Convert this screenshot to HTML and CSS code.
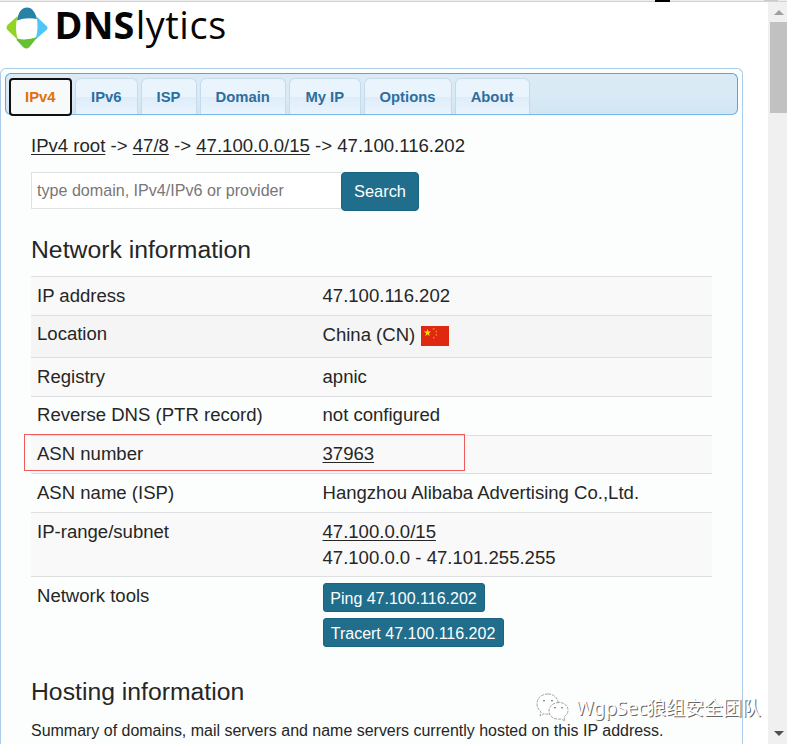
FILE: index.html
```html
<!DOCTYPE html>
<html lang="en">
<head>
<meta charset="utf-8">
<title>DNSlytics</title>
<link rel="stylesheet" href="styles.css">
</head>
<body>
<div class="window">
  <div class="chrome-edge"><span class="edge-tab"></span><span class="edge-mark"></span><span class="edge-end"></span></div>
  <div class="viewport">
    <main class="page">
      <header class="logo">
        <svg class="logo-mark" width="42" height="42" viewBox="0 0 42 42">
          <path d="M11 13.500 Q12 5 17 1.500 Q21-.5 25 1.500 Q29 4.500 31 12 Q20 10 11 13.500Z" fill="#2782a5"/>
          <path d="M11 9.500 L1.500 18 Q-.5 20.500 1.500 23 L12 33 Q8.500 22 11 12Z" fill="#93d327"/>
          <path d="M30.500 9.500 L40.500 19 Q42.500 21 40.500 23 L29.500 32.500 Q33 22 30.500 9.500Z" fill="#4fc6f7"/>
          <path d="M11 31.500 Q20 34 31.500 30 L23.500 40 Q20.500 43 17 40 L10.500 33Z" fill="#65c132"/>
        </svg>
        <div class="wordmark"><b>DNS</b><span>lytics</span></div>
      </header>
      <section class="panel">
        <nav class="tabs">
          <a class="tab w-ipv4 active">IPv4</a><a class="tab w-ipv6">IPv6</a><a class="tab w-isp">ISP</a><a class="tab w-domain">Domain</a><a class="tab w-myip">My IP</a><a class="tab w-options">Options</a><a class="tab w-about">About</a>
        </nav>
        <div class="content">
          <div class="crumbs"><u>IPv4 root</u> -&gt; <u>47/8</u> -&gt; <u>47.100.0.0/15</u> -&gt; 47.100.116.202</div>
          <form class="search">
            <input type="text" placeholder="type domain, IPv4/IPv6 or provider"><button type="button">Search</button>
          </form>
          <h2>Network information</h2>
          <div class="table">
            <div class="row shade"><span>IP address</span><span>47.100.116.202</span></div>
            <div class="row location"><span>Location</span><span class="country">China (CN)
              <svg width="28" height="20" viewBox="0 0 28 20"><rect width="28" height="20" fill="#de2910"/><path d="M6.500 3l.9 2.600h2.700L7.900 7.200l.8 2.700-2.200-1.600-2.200 1.600.8-2.700-2.200-1.600h2.700z" fill="#ffde00"/><g fill="#e98a0c"><circle cx="12.700" cy="2.900" r=".9"/><circle cx="15.300" cy="5.500" r=".9"/><circle cx="15.300" cy="8.800" r=".9"/><circle cx="12.800" cy="11.600" r=".9"/></g></svg></span></div>
            <div class="row shade registry"><span>Registry</span><span>apnic</span></div>
            <div class="row"><span>Reverse DNS (PTR record)</span><span>not configured</span></div>
            <div class="row shade marked"><span>ASN number</span><span><u>37963</u></span></div>
            <div class="row"><span>ASN name (ISP)</span><span>Hangzhou Alibaba Advertising Co.,Ltd.</span></div>
            <div class="row shade range"><span>IP-range/subnet</span><span><u>47.100.0.0/15</u><br>47.100.0.0 - 47.101.255.255</span></div>
            <div class="row tools"><span>Network tools</span><span class="buttons"><a class="ping">Ping 47.100.116.202</a><a class="trace">Tracert 47.100.116.202</a></span></div>
          </div>
          <h2 class="hosting">Hosting information</h2>
          <p class="summary">Summary of domains, mail servers and name servers currently hosted on this IP address.</p>
        </div>
      </section>
    </main>
    <aside class="scrollbar"><i class="arrow up"></i><i class="thumb"></i><i class="arrow down"></i></aside>
  </div>
  <div class="watermark">
    <svg width="34" height="30" viewBox="0 0 34 30" fill="#fff" stroke="#999" stroke-width=".9" stroke-dasharray="3 1">
      <path d="M12 1C5 1 1 5.500 1 11c0 4 2 6 4 8l-1 4 4-2.500c2 .8 4 .8 6 .5C26 20 25 1 12 1Z"/>
      <path d="M23 9.500c-6 0-10 4-10 8.500 0 6 6 9 12 8l4 2-1-4c2-1.500 4-3.500 4-6.500 0-5-4-8-9-8Z"/>
      <path d="M7 8q1-1 2 0M15 8q1-1 2 0M18 15q1-1 2 0M25 15q1-1 2 0" fill="none" stroke="#555" stroke-dasharray="none"/>
    </svg>
    <span>WgpSec狼组安全团队</span>
  </div>
</div>
</body>
</html>
```
FILE: styles.css
```css
*, ::before, ::after { box-sizing: border-box; }
body { margin: 0; background: #fff; color: #262626; font-family: "Liberation Sans", Arial, sans-serif; }
.window { position: relative; width: 787px; height: 744px; display: flex; flex-direction: column; }
.chrome-edge { height: 2px; flex: none; background: #eee; border-bottom: 1px solid #d2d2d2; display: flex; }
.edge-tab { width: 480px; margin-left: 7px; }
.edge-mark { width: 15px; height: 2px; background: #000; margin-left: 168px; }
.edge-end { width: 14px; height: 1px; background: #ccc; margin-left: 94px; }
.viewport { flex: 1; display: flex; min-height: 0; }
.page { width: 768px; display: flex; flex-direction: column; min-height: 0; }
.logo { flex: none; height: 66px; display: flex; padding: 5px 0 0 5px; }
.logo-mark { flex: none; margin: .2px 0 0 .5px; }
.wordmark { font: 37.8px/50px "Open Sans", sans-serif; color: #050505; margin: -7px 0 0 7px; display: flex; }
.wordmark b { letter-spacing: .2px; }
.wordmark span { margin-left: 1px; letter-spacing: .6px; }
.panel { width: 743px; flex: 1; min-height: 0; overflow: hidden; border: 1px solid #aaccea; border-bottom: 0; border-radius: 6px 6px 0 0; padding: 4px 4px 0; background: #fcfefe; }
.tabs { width: 733px; height: 42px; display: flex; align-items: flex-end; gap: 3px; padding-left: 3px; border: 1px solid #5ba5dd; border-bottom-color: #79b7e7; border-radius: 6px; background: linear-gradient(#dceaf5, #d9eaf6 55%, #d2e5f3); }
.tab { height: 36px; border: 1px solid #c5dbec; border-bottom: 0; border-radius: 6px 6px 0 0; background: linear-gradient(#eaf4fd 0 50%, #deedfb 51%, #eaf4fd); color: #2e6e9e; font-size: 14.8px; font-weight: 700; line-height: 36px; text-align: center; }
.tab.active { height: 38px; margin: 0 0 -2px -.5px; border: 2px solid #101010; border-radius: 4px; background: #f8fafa; color: #e17009; line-height: 35px; }
.w-ipv4 { width: 63.500px; }
.w-ipv6 { width: 62.500px; }
.w-isp { width: 56px; }
.w-domain { width: 86.500px; }
.w-myip { width: 71.500px; }
.w-options { width: 88px; }
.w-about { width: 75px; }
.content { padding: 17px 0 0 26px; font-size: 18.56px; }
.crumbs { height: 40px; line-height: 28px; font-size: 18.58px; }
.crumbs u, .row u { text-decoration-thickness: 1px; text-underline-offset: 2px; }
.search { display: flex; align-items: flex-start; height: 39px; margin: 0; }
.search input { width: 310px; height: 37px; border: 1px solid #dee2e3; border-right: 0; background: #fff; padding: 0 5px; font: 16.1px "Liberation Sans", sans-serif; }
.search input::placeholder { color: #777; }
.search button { width: 78px; height: 39px; border: 1px solid #1a6381; border-radius: 4px; background: #216e8c; color: #fff; font: 16.4px "Liberation Sans", sans-serif; padding: 0; }
h2 { margin: 24px 0 0; height: 41px; font-size: 24.75px; line-height: 30px; font-weight: 400; }
.table { width: 681px; }
.row { position: relative; display: grid; grid-template-columns: 285.5px 1fr; height: 38.750px; padding: 5.500px 6px 0; border-top: 1px solid #dddfe0; line-height: 26px; }
.shade { background: #f9f9f9; }
.row.location { height: 42.250px; background: #f5f5f5; }
.country { display: flex; gap: 6px; padding-top: 1px; }
.country svg { margin-top: 4px; }
.row.registry { padding-top: 5.800px; }
.marked::after { content: ""; position: absolute; z-index: 1; left: -7px; top: -2px; width: 441px; height: 37px; border: 1px solid #ef5a5a; }
.row.range { height: 64px; padding-top: 5.700px; }
.row.tools { height: 95px; padding-top: 6px; }
.buttons { display: flex; flex-direction: column; gap: 6px; align-items: flex-start; }
.buttons a { height: 29px; border: 1px solid #1a6381; border-radius: 3px; background: #216e8c; color: #fff; font-size: 16px; line-height: 29px; text-align: center; white-space: nowrap; }
.ping { width: 162px; }
.trace { width: 181px; }
h2.hosting { margin-top: 6px; height: 39.5px; }
.summary { margin: 0; font-size: 15.97px; line-height: 28px; white-space: nowrap; }
.scrollbar { width: 19px; background: #f0f0f0; display: flex; flex-direction: column; align-items: center; padding-left: 2px; }
.arrow { width: 0; height: 0; border: 5px solid transparent; }
.up { border-top: 0; border-bottom-color: #a0a0a0; margin-top: 8px; }
.down { border-bottom: 0; border-top-color: #505050; margin: auto 0 8px; }
.thumb { width: 17px; height: 91px; margin-top: 7px; background: #c1c1c1; }
.watermark { position: absolute; left: 536px; top: 693px; display: flex; align-items: center; gap: 6px; color: #fff; font: 19px/30px "Noto Sans", "Noto Sans CJK SC", sans-serif; white-space: nowrap; text-shadow: 1px 1px 0 #666; }
```
